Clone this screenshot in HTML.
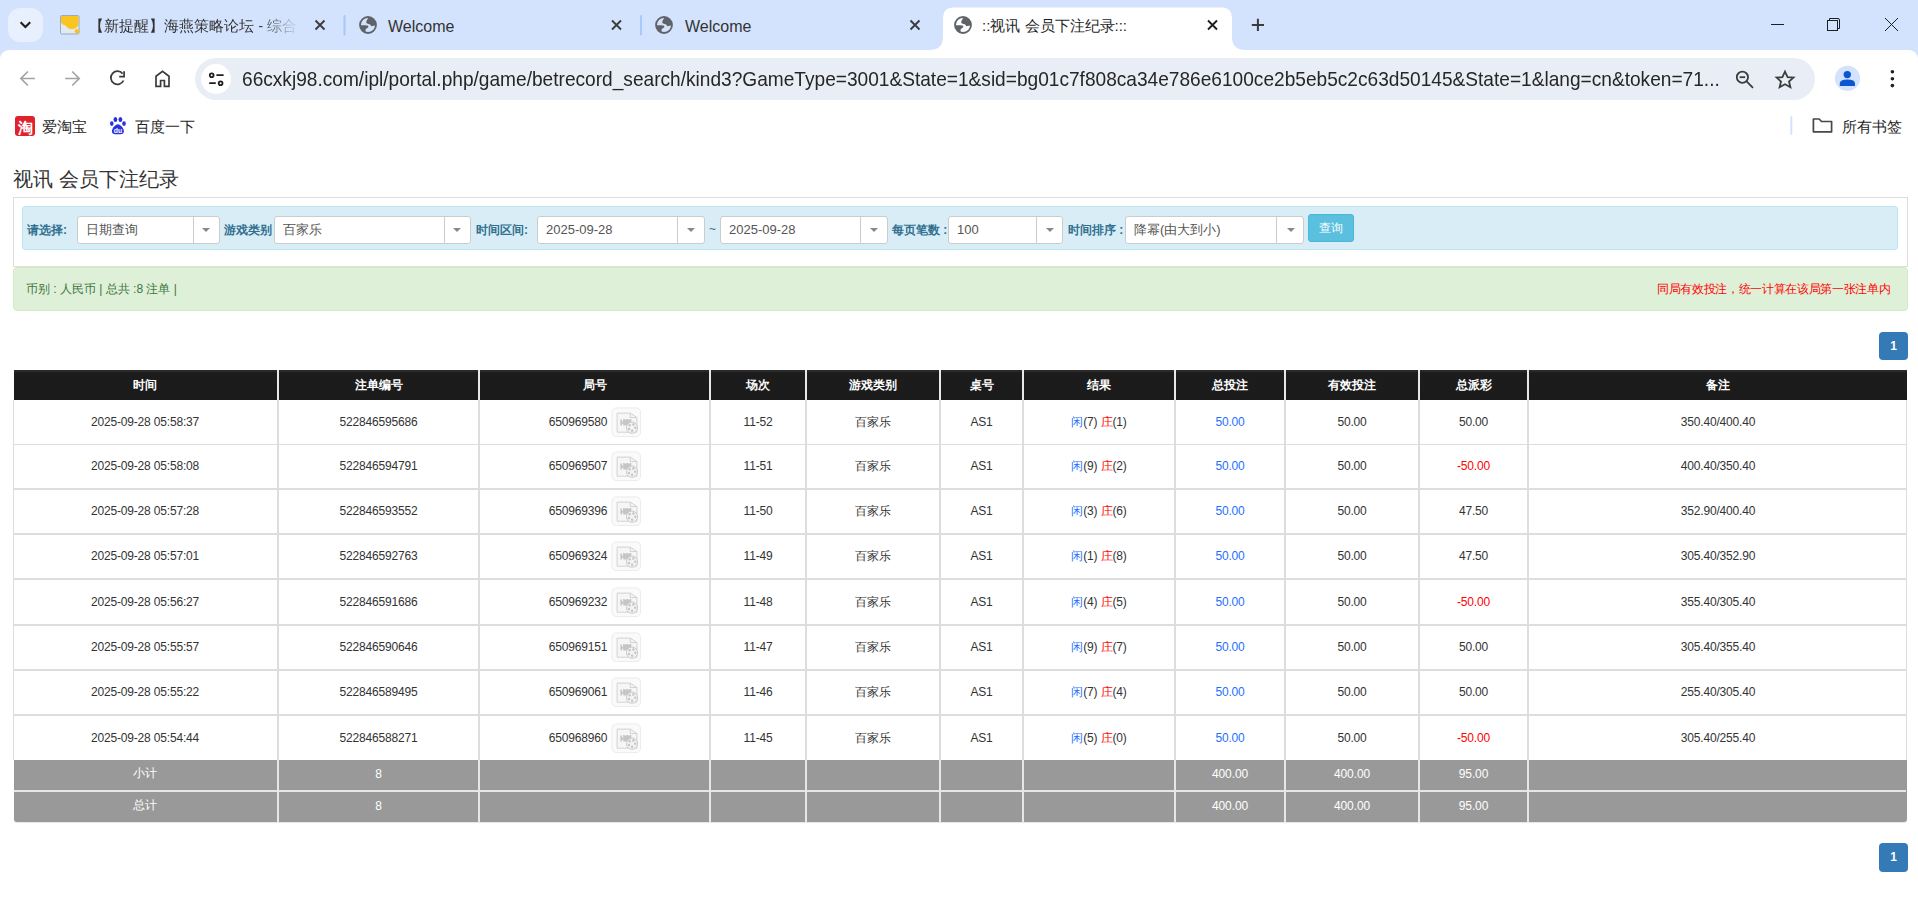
<!DOCTYPE html>
<html><head><meta charset="utf-8">
<style>
*{box-sizing:border-box;margin:0;padding:0}
html,body{width:1918px;height:914px;overflow:hidden;background:#fff;font-family:"Liberation Sans",sans-serif;position:relative}
.a{position:absolute}
#strip{left:0;top:0;width:1918px;height:62px;background:#d3e3fd}
#tool{left:0;top:50px;width:1918px;height:864px;background:#fff;border-radius:9px 9px 0 0}
.tabtxt{font-size:15px;color:#1f1f1f;white-space:nowrap;line-height:18px}
.sep{width:2px;height:20px;background:#a8c7fa;border-radius:1px;top:15px}
/* page */
.lbl{font-size:12px;font-weight:bold;color:#31708f;line-height:14px;white-space:nowrap}
.sel{top:216px;height:28px;background:#fff;border:1px solid #ccc;border-radius:3px}
.sel .v{position:absolute;left:8px;top:5px;font-size:13px;color:#555;line-height:15px;white-space:nowrap}
.sel .d{position:absolute;top:0;bottom:0;width:1px;background:#ccc}
.sel .ar{position:absolute;top:11px;width:0;height:0;border-left:4px solid transparent;border-right:4px solid transparent;border-top:4px solid #888}
.pg{width:29px;height:28px;background:#337ab7;border-radius:4px;color:#fff;font-size:12px;font-weight:bold;text-align:center;line-height:28px}
.th{top:370px;height:30px;display:flex;align-items:center;justify-content:center;color:#fff;font-size:12px;font-weight:bold}
.td{display:flex;align-items:center;justify-content:center;color:#333;font-size:12px;letter-spacing:-0.17px;white-space:nowrap}
.tf{height:30px;display:flex;align-items:center;justify-content:center;color:#fff;font-size:12px;letter-spacing:-0.1px;padding-bottom:3px}
.bl{color:#1f6fff}.rd{color:#f00}
.vi{margin-left:3px;display:inline-block;vertical-align:middle;position:relative;left:1px;top:0}
.in{display:inline-flex;align-items:center;white-space:pre}
</style></head><body>
<div id="strip" class="a"></div>
<div id="tool" class="a"></div>
<!-- tab strip -->
<div class="a" style="left:8px;top:8px;width:35px;height:34px;border-radius:12px;background:#e8effd"></div>
<svg class="a" style="left:0;top:0" width="1918" height="50" viewBox="0 0 1918 50">
  <!-- dropdown chevron -->
  <path d="M20.6 22.2L25.4 27L30.2 22.2" fill="none" stroke="#1f1f1f" stroke-width="2.1"/>
  <!-- favicon tab1 -->
  <rect x="60.5" y="15.5" width="18.5" height="18.5" rx="1.2" fill="#e2e9f3" stroke="#98aac4" stroke-width="1"/>
  <path d="M61 16H78.5V23C78.2 27 75.5 29.2 71.8 29.2C68.5 29.2 66.4 27.3 65.7 25.6C63.8 25.2 62 24 61 22.5Z" fill="#f9c520"/>
  <circle cx="77" cy="31.2" r="2.3" fill="#f9c01c"/>
  <!-- close X tabs -->
  <g stroke="#3c3c3c" stroke-width="1.9" stroke-linecap="butt">
    <path d="M315.5 20.5l9 9M324.5 20.5l-9 9"/>
    <path d="M612 20.5l9 9M621 20.5l-9 9"/>
    <path d="M910.5 20.5l9 9M919.5 20.5l-9 9"/>
  </g>
  <!-- separators -->
  <rect x="343.5" y="15" width="2" height="20.5" rx="1" fill="#a8c7fa"/>
  <rect x="640" y="15" width="2" height="20.5" rx="1" fill="#a8c7fa"/>
  <!-- active tab -->
  <path d="M929 50Q943 50 943 37V18Q943 7.5 953 7.5H1222Q1232 7.5 1232 18V37Q1232 50 1246 50Z" fill="#fff"/>
  <path d="M1208 20.5l9 9M1217 20.5l-9 9" stroke="#1f1f1f" stroke-width="1.9"/>
  <!-- plus -->
  <path d="M1251.8 25H1264M1257.9 18.8V31" stroke="#3c3c3c" stroke-width="2"/>
  <!-- window controls -->
  <path d="M1771 24.5H1784" stroke="#1f1f1f" stroke-width="1"/>
  <rect x="1827.5" y="20.5" width="10" height="10" fill="none" stroke="#1f1f1f" stroke-width="1"/>
  <path d="M1829.5 20V18.5H1838Q1839.5 18.5 1839.5 20V28.5H1838" fill="none" stroke="#1f1f1f" stroke-width="1"/>
  <path d="M1885 18L1898 31M1898 18L1885 31" stroke="#1f1f1f" stroke-width="1"/>
</svg>
<!-- globes -->
<svg class="a" style="left:359px;top:16px" width="18" height="18" viewBox="0 0 18 18"><g id="globe"><circle cx="9" cy="9" r="8" fill="none" stroke="#5f6368" stroke-width="1.8"/><path d="M10 1.2C8.5 3 7.3 4.5 7.2 6.3C7.3 7.6 8.7 8 10.5 8.2C11.5 8.5 11.8 9.3 12.2 10.2C14 10 15.6 9.6 16.8 9.5C17 5.5 14.5 2 10 1.2Z" fill="#5f6368"/><path d="M1.2 9.4C3.5 9.3 6.2 9.3 8.3 9.6C9.4 9.9 9.6 10.8 9 11.6C8 12.4 7 12.6 6.6 13.6C6.4 14.7 6.6 15.8 6.8 16.6C3.5 15.6 1.3 12.8 1.2 9.4Z" fill="#5f6368"/></g></svg>
<svg class="a" style="left:655px;top:16px" width="18" height="18" viewBox="0 0 18 18"><use href="#globe"/></svg>
<svg class="a" style="left:954px;top:16px" width="18" height="18" viewBox="0 0 18 18"><use href="#globe"/></svg>
<!-- tab titles -->
<div class="a tabtxt" style="left:89px;top:17px;width:210px;overflow:hidden;font-size:15px;color:#333;-webkit-mask-image:linear-gradient(90deg,#000 80%,transparent)">【新提醒】海燕策略论坛 - 综合社区</div>
<div class="a tabtxt" style="left:388px;top:18px;font-size:16px;color:#333">Welcome</div>
<div class="a tabtxt" style="left:685px;top:18px;font-size:16px;color:#333">Welcome</div>
<div class="a tabtxt" style="left:982px;top:17px;font-size:15px;color:#1f1f1f">::视讯 会员下注纪录:::</div>

<!-- toolbar -->
<svg class="a" style="left:0;top:50px" width="1918" height="100" viewBox="0 50 1918 100">
  <!-- back / forward -->
  <g fill="none" stroke="#a3a3a3" stroke-width="1.7">
    <path d="M34.9 78.5H21.5M27.9 71.5L20.9 78.5L27.9 85.5"/>
    <path d="M65.2 78.5H78.6M72.2 71.5L79.2 78.5L72.2 85.5"/>
  </g>
  <!-- reload -->
  <g fill="none" stroke="#3c3c3c" stroke-width="1.75">
    <path d="M123.5 80.5A6.6 6.6 0 1 1 122.6 73.6"/>
    <path d="M119.2 76.7H124.1V71.2"/>
  </g>
  <!-- home -->
  <path d="M156 86.4V76.2L162.5 71.3L169 76.2V86.4H164.4V80.5H160.6V86.4Z" fill="none" stroke="#3c3c3c" stroke-width="1.7" stroke-linejoin="miter"/>
  <!-- omnibox -->
  <rect x="195" y="58" width="1620" height="42" rx="21" fill="#e9eef6"/>
  <circle cx="216" cy="79" r="15" fill="#fff"/>
  <g fill="none" stroke="#1f1f1f" stroke-width="1.8">
    <circle cx="211.7" cy="75.3" r="1.9"/>
    <path d="M216.4 75.2H223.6M209.2 83.2H215.8"/>
    <circle cx="220.6" cy="83.3" r="1.9"/>
  </g>
  <!-- zoom -->
  <g fill="none" stroke="#3c3c3c" stroke-width="1.8">
    <circle cx="1742.4" cy="77.2" r="5.6"/>
    <path d="M1746.6 81.4L1753 87.8"/>
    <path d="M1739.6 77.2H1745.2"/>
  </g>
  <!-- star -->
  <path d="M1785 71.6L1787.6 77.2L1793.4 77.6L1789 81.5L1790.4 87.3L1785 84.2L1779.6 87.3L1781 81.5L1776.6 77.6L1782.4 77.2Z" fill="none" stroke="#3c3c3c" stroke-width="1.8" stroke-linejoin="miter"/>
  <!-- avatar -->
  <circle cx="1847.5" cy="78.4" r="12.6" fill="#d3e3fd"/>
  <circle cx="1847.3" cy="74.6" r="3.7" fill="#0b57d0"/>
  <path d="M1839.8 86V83.5Q1839.8 79.5 1847.4 79.5Q1855 79.5 1855 83.5V86Z" fill="#0b57d0"/>
  <!-- kebab -->
  <circle cx="1892.4" cy="71.8" r="1.8" fill="#1f1f1f"/>
  <circle cx="1892.4" cy="78.7" r="1.8" fill="#1f1f1f"/>
  <circle cx="1892.4" cy="85.6" r="1.8" fill="#1f1f1f"/>
  <!-- bookmarks: taobao -->
  <rect x="15" y="116" width="20" height="20" rx="3" fill="#e0222d"/>
  <text x="25" y="132.5" font-size="15" font-weight="bold" fill="#fff" text-anchor="middle">淘</text>
  <!-- baidu paw -->
  <g fill="#2932e1">
    <ellipse cx="111.8" cy="123.6" rx="1.8" ry="2.4"/>
    <ellipse cx="115.4" cy="119.5" rx="1.9" ry="2.5"/>
    <ellipse cx="120.4" cy="119.5" rx="1.9" ry="2.5"/>
    <ellipse cx="124" cy="123.6" rx="1.8" ry="2.4"/>
    <path d="M117.9 124.3C115.2 124.3 112.3 128.3 111.9 130.8C111.6 133.3 113.4 134.2 115.2 134.2H120.6C122.4 134.2 124.2 133.3 123.9 130.8C123.5 128.3 120.6 124.3 117.9 124.3Z"/>
  </g>
  <text x="117.9" y="132.6" font-size="6.8" font-weight="bold" fill="#fff" text-anchor="middle">du</text>
  <!-- bookmark separator + folder -->
  <rect x="1790.3" y="116" width="2" height="19" rx="1" fill="#d3e3fd"/>
  <path d="M1813.4 119V131.8H1831.6V121.5H1821.5L1819.2 119Z" fill="none" stroke="#474747" stroke-width="1.7" stroke-linejoin="round"/>
</svg>
<div class="a" style="left:242px;top:68px;font-size:19.8px;color:#262626;white-space:nowrap;line-height:22px;transform:scaleX(0.966);transform-origin:0 0">66cxkj98.com/ipl/portal.php/game/betrecord_search/kind3?GameType=3001&amp;State=1&amp;sid=bg01c7f808ca34e786e6100ce2b5eb5c2c63d50145&amp;State=1&amp;lang=cn&amp;token=71...</div>
<div class="a" style="left:42px;top:118px;font-size:15px;color:#1f1f1f;white-space:nowrap;line-height:18px">爱淘宝</div>
<div class="a" style="left:135px;top:118px;font-size:15px;color:#1f1f1f;white-space:nowrap;line-height:18px">百度一下</div>
<div class="a" style="left:1842px;top:118px;font-size:15px;color:#1f1f1f;white-space:nowrap;line-height:18px">所有书签</div>


<!-- PAGE -->
<div class="a" style="left:13px;top:167px;font-size:20px;color:#333;line-height:24px;white-space:nowrap">视讯 会员下注纪录</div>
<div class="a" style="left:13px;top:197px;width:1895px;height:70px;border:1px solid #ddd"></div>
<div class="a" style="left:22px;top:206px;width:1876px;height:44px;background:#d9edf7;border:1px solid #bce8f1;border-radius:3px"></div>

<div class="a lbl" style="left:27px;top:223px">请选择:</div>
<div class="a sel" style="left:77px;width:143px"><span class="v">日期查询</span><i class="d" style="left:115px"></i><i class="ar" style="left:124px"></i></div>
<div class="a lbl" style="left:224px;top:223px">游戏类别</div>
<div class="a sel" style="left:274px;width:197px"><span class="v">百家乐</span><i class="d" style="left:169px"></i><i class="ar" style="left:178px"></i></div>
<div class="a lbl" style="left:476px;top:223px">时间区间:</div>
<div class="a sel" style="left:537px;width:168px"><span class="v">2025-09-28</span><i class="d" style="left:139px"></i><i class="ar" style="left:149px"></i></div>
<div class="a" style="left:709px;top:222px;font-size:12px;color:#31708f">~</div>
<div class="a sel" style="left:720px;width:168px"><span class="v">2025-09-28</span><i class="d" style="left:139px"></i><i class="ar" style="left:149px"></i></div>
<div class="a lbl" style="left:892px;top:223px">每页笔数 :</div>
<div class="a sel" style="left:948px;width:115px"><span class="v">100</span><i class="d" style="left:87px"></i><i class="ar" style="left:97px"></i></div>
<div class="a lbl" style="left:1068px;top:223px">时间排序 :</div>
<div class="a sel" style="left:1125px;width:179px"><span class="v">降幂(由大到小)</span><i class="d" style="left:150px"></i><i class="ar" style="left:161px"></i></div>
<div class="a" style="left:1308px;top:214px;width:46px;height:28px;background:#5bc0de;border:1px solid #46b8da;border-radius:3px;color:#fff;font-size:12px;text-align:center;line-height:26px">查询</div>

<div class="a" style="left:13px;top:267px;width:1895px;height:44px;background:#dff0d8;border:1px solid #d6e9c6;border-radius:4px"></div>
<div class="a" style="left:26px;top:282px;font-size:12px;color:#3c763d;line-height:14px;white-space:nowrap">币别 : 人民币 | 总共 :8 注单 |</div>
<div class="a" style="left:1657px;top:282px;font-size:12px;letter-spacing:-0.33px;color:#f00;line-height:14px;white-space:nowrap">同局有效投注，统一计算在该局第一张注单内</div>

<div class="a pg" style="left:1879px;top:332px">1</div>
<div class="a" style="left:14px;top:370px;width:1893px;height:30px;background:linear-gradient(#303030,#1c1c1c 3px,#1b1b1b)"></div>
<div class="a th" style="left:13px;width:264px">时间</div>
<div class="a th" style="left:279px;width:199px">注单编号</div>
<div class="a th" style="left:480px;width:229px">局号</div>
<div class="a th" style="left:711px;width:94px">场次</div>
<div class="a th" style="left:807px;width:132px">游戏类别</div>
<div class="a th" style="left:941px;width:81px">桌号</div>
<div class="a th" style="left:1024px;width:150px">结果</div>
<div class="a th" style="left:1176px;width:108px">总投注</div>
<div class="a th" style="left:1286px;width:132px">有效投注</div>
<div class="a th" style="left:1420px;width:107px">总派彩</div>
<div class="a th" style="left:1529px;width:378px">备注</div>
<div class="a" style="left:277px;top:370px;width:2px;height:30px;background:#e8e8e8"></div>
<div class="a" style="left:478px;top:370px;width:2px;height:30px;background:#e8e8e8"></div>
<div class="a" style="left:709px;top:370px;width:2px;height:30px;background:#e8e8e8"></div>
<div class="a" style="left:805px;top:370px;width:2px;height:30px;background:#e8e8e8"></div>
<div class="a" style="left:939px;top:370px;width:2px;height:30px;background:#e8e8e8"></div>
<div class="a" style="left:1022px;top:370px;width:2px;height:30px;background:#e8e8e8"></div>
<div class="a" style="left:1174px;top:370px;width:2px;height:30px;background:#e8e8e8"></div>
<div class="a" style="left:1284px;top:370px;width:2px;height:30px;background:#e8e8e8"></div>
<div class="a" style="left:1418px;top:370px;width:2px;height:30px;background:#e8e8e8"></div>
<div class="a" style="left:1527px;top:370px;width:2px;height:30px;background:#e8e8e8"></div>
<div class="a" style="left:13px;top:400px;width:1894px;height:360px;background:#fff;border-left:1px solid #ddd;border-right:1px solid #ddd"></div>
<div class="a" style="left:14px;top:444px;width:1892px;height:1px;background:#ddd"></div>
<div class="a td" style="left:13px;top:400px;width:264px;height:44px"><span class="in">2025-09-28 05:58:37</span></div>
<div class="a td" style="left:279px;top:400px;width:199px;height:44px"><span class="in">522846595686</span></div>
<div class="a td" style="left:480px;top:400px;width:229px;height:44px"><span class="in">650969580<svg class="vi" width="30" height="30" viewBox="0 0 30 30"><rect x="0.9" y="0.9" width="28.7" height="28.7" rx="4.5" fill="#fafafa" stroke="#ebebeb"/><path d="M6.1 6.1H19.3L25.9 10.5V25.2H6.1Z" fill="#f6f6f6" stroke="#d2d2d2" stroke-width="1"/><path d="M19.3 6.1V10.5H25.9" fill="none" stroke="#d2d2d2"/><path d="M9.3 12.4h1.6v1.6l1.2 0.9v-2.8h1.5l0.9 0.9l0.9-0.9h1.6l0.9 0.9l0.9-0.9h1.5v6.5h-8.1v-2.3l-1.2 0.9v1.4h-1.6z" fill="#c6c6c6"/><circle cx="21" cy="20.7" r="5.6" fill="#f3f3f3" stroke="#cbcbcb" stroke-width="1"/><circle cx="18.7" cy="18.2" r="1.25" fill="#c6c6c6"/><circle cx="22.4" cy="17.6" r="1.25" fill="#c6c6c6"/><circle cx="24.3" cy="20.8" r="1.25" fill="#c6c6c6"/><circle cx="21.1" cy="23.7" r="1.25" fill="#c6c6c6"/><circle cx="18" cy="21.9" r="1.25" fill="#c6c6c6"/></svg></span></div>
<div class="a td" style="left:711px;top:400px;width:94px;height:44px"><span class="in">11-52</span></div>
<div class="a td" style="left:807px;top:400px;width:132px;height:44px"><span class="in">百家乐</span></div>
<div class="a td" style="left:941px;top:400px;width:81px;height:44px"><span class="in">AS1</span></div>
<div class="a td" style="left:1024px;top:400px;width:150px;height:44px"><span class="in"><span class="bl">闲</span>(7) <span class="rd">庄</span>(1)</span></div>
<div class="a td" style="left:1176px;top:400px;width:108px;height:44px"><span class="in"><span class="bl">50.00</span></span></div>
<div class="a td" style="left:1286px;top:400px;width:132px;height:44px"><span class="in">50.00</span></div>
<div class="a td" style="left:1420px;top:400px;width:107px;height:44px"><span class="in">50.00</span></div>
<div class="a td" style="left:1529px;top:400px;width:378px;height:44px"><span class="in">350.40/400.40</span></div>
<div class="a" style="left:14px;top:488px;width:1892px;height:2px;background:#ddd"></div>
<div class="a td" style="left:13px;top:445px;width:264px;height:43px;padding-bottom:1px"><span class="in">2025-09-28 05:58:08</span></div>
<div class="a td" style="left:279px;top:445px;width:199px;height:43px;padding-bottom:1px"><span class="in">522846594791</span></div>
<div class="a td" style="left:480px;top:445px;width:229px;height:43px;padding-bottom:1px"><span class="in">650969507<svg class="vi" width="30" height="30" viewBox="0 0 30 30"><rect x="0.9" y="0.9" width="28.7" height="28.7" rx="4.5" fill="#fafafa" stroke="#ebebeb"/><path d="M6.1 6.1H19.3L25.9 10.5V25.2H6.1Z" fill="#f6f6f6" stroke="#d2d2d2" stroke-width="1"/><path d="M19.3 6.1V10.5H25.9" fill="none" stroke="#d2d2d2"/><path d="M9.3 12.4h1.6v1.6l1.2 0.9v-2.8h1.5l0.9 0.9l0.9-0.9h1.6l0.9 0.9l0.9-0.9h1.5v6.5h-8.1v-2.3l-1.2 0.9v1.4h-1.6z" fill="#c6c6c6"/><circle cx="21" cy="20.7" r="5.6" fill="#f3f3f3" stroke="#cbcbcb" stroke-width="1"/><circle cx="18.7" cy="18.2" r="1.25" fill="#c6c6c6"/><circle cx="22.4" cy="17.6" r="1.25" fill="#c6c6c6"/><circle cx="24.3" cy="20.8" r="1.25" fill="#c6c6c6"/><circle cx="21.1" cy="23.7" r="1.25" fill="#c6c6c6"/><circle cx="18" cy="21.9" r="1.25" fill="#c6c6c6"/></svg></span></div>
<div class="a td" style="left:711px;top:445px;width:94px;height:43px;padding-bottom:1px"><span class="in">11-51</span></div>
<div class="a td" style="left:807px;top:445px;width:132px;height:43px;padding-bottom:1px"><span class="in">百家乐</span></div>
<div class="a td" style="left:941px;top:445px;width:81px;height:43px;padding-bottom:1px"><span class="in">AS1</span></div>
<div class="a td" style="left:1024px;top:445px;width:150px;height:43px;padding-bottom:1px"><span class="in"><span class="bl">闲</span>(9) <span class="rd">庄</span>(2)</span></div>
<div class="a td" style="left:1176px;top:445px;width:108px;height:43px;padding-bottom:1px"><span class="in"><span class="bl">50.00</span></span></div>
<div class="a td" style="left:1286px;top:445px;width:132px;height:43px;padding-bottom:1px"><span class="in">50.00</span></div>
<div class="a td" style="left:1420px;top:445px;width:107px;height:43px;padding-bottom:1px"><span class="in"><span class="rd">-50.00</span></span></div>
<div class="a td" style="left:1529px;top:445px;width:378px;height:43px;padding-bottom:1px"><span class="in">400.40/350.40</span></div>
<div class="a" style="left:14px;top:533px;width:1892px;height:2px;background:#ddd"></div>
<div class="a td" style="left:13px;top:490px;width:264px;height:43px;padding-bottom:1px"><span class="in">2025-09-28 05:57:28</span></div>
<div class="a td" style="left:279px;top:490px;width:199px;height:43px;padding-bottom:1px"><span class="in">522846593552</span></div>
<div class="a td" style="left:480px;top:490px;width:229px;height:43px;padding-bottom:1px"><span class="in">650969396<svg class="vi" width="30" height="30" viewBox="0 0 30 30"><rect x="0.9" y="0.9" width="28.7" height="28.7" rx="4.5" fill="#fafafa" stroke="#ebebeb"/><path d="M6.1 6.1H19.3L25.9 10.5V25.2H6.1Z" fill="#f6f6f6" stroke="#d2d2d2" stroke-width="1"/><path d="M19.3 6.1V10.5H25.9" fill="none" stroke="#d2d2d2"/><path d="M9.3 12.4h1.6v1.6l1.2 0.9v-2.8h1.5l0.9 0.9l0.9-0.9h1.6l0.9 0.9l0.9-0.9h1.5v6.5h-8.1v-2.3l-1.2 0.9v1.4h-1.6z" fill="#c6c6c6"/><circle cx="21" cy="20.7" r="5.6" fill="#f3f3f3" stroke="#cbcbcb" stroke-width="1"/><circle cx="18.7" cy="18.2" r="1.25" fill="#c6c6c6"/><circle cx="22.4" cy="17.6" r="1.25" fill="#c6c6c6"/><circle cx="24.3" cy="20.8" r="1.25" fill="#c6c6c6"/><circle cx="21.1" cy="23.7" r="1.25" fill="#c6c6c6"/><circle cx="18" cy="21.9" r="1.25" fill="#c6c6c6"/></svg></span></div>
<div class="a td" style="left:711px;top:490px;width:94px;height:43px;padding-bottom:1px"><span class="in">11-50</span></div>
<div class="a td" style="left:807px;top:490px;width:132px;height:43px;padding-bottom:1px"><span class="in">百家乐</span></div>
<div class="a td" style="left:941px;top:490px;width:81px;height:43px;padding-bottom:1px"><span class="in">AS1</span></div>
<div class="a td" style="left:1024px;top:490px;width:150px;height:43px;padding-bottom:1px"><span class="in"><span class="bl">闲</span>(3) <span class="rd">庄</span>(6)</span></div>
<div class="a td" style="left:1176px;top:490px;width:108px;height:43px;padding-bottom:1px"><span class="in"><span class="bl">50.00</span></span></div>
<div class="a td" style="left:1286px;top:490px;width:132px;height:43px;padding-bottom:1px"><span class="in">50.00</span></div>
<div class="a td" style="left:1420px;top:490px;width:107px;height:43px;padding-bottom:1px"><span class="in">47.50</span></div>
<div class="a td" style="left:1529px;top:490px;width:378px;height:43px;padding-bottom:1px"><span class="in">352.90/400.40</span></div>
<div class="a" style="left:14px;top:578px;width:1892px;height:2px;background:#ddd"></div>
<div class="a td" style="left:13px;top:535px;width:264px;height:43px;padding-bottom:1px"><span class="in">2025-09-28 05:57:01</span></div>
<div class="a td" style="left:279px;top:535px;width:199px;height:43px;padding-bottom:1px"><span class="in">522846592763</span></div>
<div class="a td" style="left:480px;top:535px;width:229px;height:43px;padding-bottom:1px"><span class="in">650969324<svg class="vi" width="30" height="30" viewBox="0 0 30 30"><rect x="0.9" y="0.9" width="28.7" height="28.7" rx="4.5" fill="#fafafa" stroke="#ebebeb"/><path d="M6.1 6.1H19.3L25.9 10.5V25.2H6.1Z" fill="#f6f6f6" stroke="#d2d2d2" stroke-width="1"/><path d="M19.3 6.1V10.5H25.9" fill="none" stroke="#d2d2d2"/><path d="M9.3 12.4h1.6v1.6l1.2 0.9v-2.8h1.5l0.9 0.9l0.9-0.9h1.6l0.9 0.9l0.9-0.9h1.5v6.5h-8.1v-2.3l-1.2 0.9v1.4h-1.6z" fill="#c6c6c6"/><circle cx="21" cy="20.7" r="5.6" fill="#f3f3f3" stroke="#cbcbcb" stroke-width="1"/><circle cx="18.7" cy="18.2" r="1.25" fill="#c6c6c6"/><circle cx="22.4" cy="17.6" r="1.25" fill="#c6c6c6"/><circle cx="24.3" cy="20.8" r="1.25" fill="#c6c6c6"/><circle cx="21.1" cy="23.7" r="1.25" fill="#c6c6c6"/><circle cx="18" cy="21.9" r="1.25" fill="#c6c6c6"/></svg></span></div>
<div class="a td" style="left:711px;top:535px;width:94px;height:43px;padding-bottom:1px"><span class="in">11-49</span></div>
<div class="a td" style="left:807px;top:535px;width:132px;height:43px;padding-bottom:1px"><span class="in">百家乐</span></div>
<div class="a td" style="left:941px;top:535px;width:81px;height:43px;padding-bottom:1px"><span class="in">AS1</span></div>
<div class="a td" style="left:1024px;top:535px;width:150px;height:43px;padding-bottom:1px"><span class="in"><span class="bl">闲</span>(1) <span class="rd">庄</span>(8)</span></div>
<div class="a td" style="left:1176px;top:535px;width:108px;height:43px;padding-bottom:1px"><span class="in"><span class="bl">50.00</span></span></div>
<div class="a td" style="left:1286px;top:535px;width:132px;height:43px;padding-bottom:1px"><span class="in">50.00</span></div>
<div class="a td" style="left:1420px;top:535px;width:107px;height:43px;padding-bottom:1px"><span class="in">47.50</span></div>
<div class="a td" style="left:1529px;top:535px;width:378px;height:43px;padding-bottom:1px"><span class="in">305.40/352.90</span></div>
<div class="a" style="left:14px;top:624px;width:1892px;height:2px;background:#ddd"></div>
<div class="a td" style="left:13px;top:580px;width:264px;height:44px"><span class="in">2025-09-28 05:56:27</span></div>
<div class="a td" style="left:279px;top:580px;width:199px;height:44px"><span class="in">522846591686</span></div>
<div class="a td" style="left:480px;top:580px;width:229px;height:44px"><span class="in">650969232<svg class="vi" width="30" height="30" viewBox="0 0 30 30"><rect x="0.9" y="0.9" width="28.7" height="28.7" rx="4.5" fill="#fafafa" stroke="#ebebeb"/><path d="M6.1 6.1H19.3L25.9 10.5V25.2H6.1Z" fill="#f6f6f6" stroke="#d2d2d2" stroke-width="1"/><path d="M19.3 6.1V10.5H25.9" fill="none" stroke="#d2d2d2"/><path d="M9.3 12.4h1.6v1.6l1.2 0.9v-2.8h1.5l0.9 0.9l0.9-0.9h1.6l0.9 0.9l0.9-0.9h1.5v6.5h-8.1v-2.3l-1.2 0.9v1.4h-1.6z" fill="#c6c6c6"/><circle cx="21" cy="20.7" r="5.6" fill="#f3f3f3" stroke="#cbcbcb" stroke-width="1"/><circle cx="18.7" cy="18.2" r="1.25" fill="#c6c6c6"/><circle cx="22.4" cy="17.6" r="1.25" fill="#c6c6c6"/><circle cx="24.3" cy="20.8" r="1.25" fill="#c6c6c6"/><circle cx="21.1" cy="23.7" r="1.25" fill="#c6c6c6"/><circle cx="18" cy="21.9" r="1.25" fill="#c6c6c6"/></svg></span></div>
<div class="a td" style="left:711px;top:580px;width:94px;height:44px"><span class="in">11-48</span></div>
<div class="a td" style="left:807px;top:580px;width:132px;height:44px"><span class="in">百家乐</span></div>
<div class="a td" style="left:941px;top:580px;width:81px;height:44px"><span class="in">AS1</span></div>
<div class="a td" style="left:1024px;top:580px;width:150px;height:44px"><span class="in"><span class="bl">闲</span>(4) <span class="rd">庄</span>(5)</span></div>
<div class="a td" style="left:1176px;top:580px;width:108px;height:44px"><span class="in"><span class="bl">50.00</span></span></div>
<div class="a td" style="left:1286px;top:580px;width:132px;height:44px"><span class="in">50.00</span></div>
<div class="a td" style="left:1420px;top:580px;width:107px;height:44px"><span class="in"><span class="rd">-50.00</span></span></div>
<div class="a td" style="left:1529px;top:580px;width:378px;height:44px"><span class="in">355.40/305.40</span></div>
<div class="a" style="left:14px;top:669px;width:1892px;height:2px;background:#ddd"></div>
<div class="a td" style="left:13px;top:626px;width:264px;height:43px;padding-bottom:1px"><span class="in">2025-09-28 05:55:57</span></div>
<div class="a td" style="left:279px;top:626px;width:199px;height:43px;padding-bottom:1px"><span class="in">522846590646</span></div>
<div class="a td" style="left:480px;top:626px;width:229px;height:43px;padding-bottom:1px"><span class="in">650969151<svg class="vi" width="30" height="30" viewBox="0 0 30 30"><rect x="0.9" y="0.9" width="28.7" height="28.7" rx="4.5" fill="#fafafa" stroke="#ebebeb"/><path d="M6.1 6.1H19.3L25.9 10.5V25.2H6.1Z" fill="#f6f6f6" stroke="#d2d2d2" stroke-width="1"/><path d="M19.3 6.1V10.5H25.9" fill="none" stroke="#d2d2d2"/><path d="M9.3 12.4h1.6v1.6l1.2 0.9v-2.8h1.5l0.9 0.9l0.9-0.9h1.6l0.9 0.9l0.9-0.9h1.5v6.5h-8.1v-2.3l-1.2 0.9v1.4h-1.6z" fill="#c6c6c6"/><circle cx="21" cy="20.7" r="5.6" fill="#f3f3f3" stroke="#cbcbcb" stroke-width="1"/><circle cx="18.7" cy="18.2" r="1.25" fill="#c6c6c6"/><circle cx="22.4" cy="17.6" r="1.25" fill="#c6c6c6"/><circle cx="24.3" cy="20.8" r="1.25" fill="#c6c6c6"/><circle cx="21.1" cy="23.7" r="1.25" fill="#c6c6c6"/><circle cx="18" cy="21.9" r="1.25" fill="#c6c6c6"/></svg></span></div>
<div class="a td" style="left:711px;top:626px;width:94px;height:43px;padding-bottom:1px"><span class="in">11-47</span></div>
<div class="a td" style="left:807px;top:626px;width:132px;height:43px;padding-bottom:1px"><span class="in">百家乐</span></div>
<div class="a td" style="left:941px;top:626px;width:81px;height:43px;padding-bottom:1px"><span class="in">AS1</span></div>
<div class="a td" style="left:1024px;top:626px;width:150px;height:43px;padding-bottom:1px"><span class="in"><span class="bl">闲</span>(9) <span class="rd">庄</span>(7)</span></div>
<div class="a td" style="left:1176px;top:626px;width:108px;height:43px;padding-bottom:1px"><span class="in"><span class="bl">50.00</span></span></div>
<div class="a td" style="left:1286px;top:626px;width:132px;height:43px;padding-bottom:1px"><span class="in">50.00</span></div>
<div class="a td" style="left:1420px;top:626px;width:107px;height:43px;padding-bottom:1px"><span class="in">50.00</span></div>
<div class="a td" style="left:1529px;top:626px;width:378px;height:43px;padding-bottom:1px"><span class="in">305.40/355.40</span></div>
<div class="a" style="left:14px;top:714px;width:1892px;height:2px;background:#ddd"></div>
<div class="a td" style="left:13px;top:671px;width:264px;height:43px;padding-bottom:1px"><span class="in">2025-09-28 05:55:22</span></div>
<div class="a td" style="left:279px;top:671px;width:199px;height:43px;padding-bottom:1px"><span class="in">522846589495</span></div>
<div class="a td" style="left:480px;top:671px;width:229px;height:43px;padding-bottom:1px"><span class="in">650969061<svg class="vi" width="30" height="30" viewBox="0 0 30 30"><rect x="0.9" y="0.9" width="28.7" height="28.7" rx="4.5" fill="#fafafa" stroke="#ebebeb"/><path d="M6.1 6.1H19.3L25.9 10.5V25.2H6.1Z" fill="#f6f6f6" stroke="#d2d2d2" stroke-width="1"/><path d="M19.3 6.1V10.5H25.9" fill="none" stroke="#d2d2d2"/><path d="M9.3 12.4h1.6v1.6l1.2 0.9v-2.8h1.5l0.9 0.9l0.9-0.9h1.6l0.9 0.9l0.9-0.9h1.5v6.5h-8.1v-2.3l-1.2 0.9v1.4h-1.6z" fill="#c6c6c6"/><circle cx="21" cy="20.7" r="5.6" fill="#f3f3f3" stroke="#cbcbcb" stroke-width="1"/><circle cx="18.7" cy="18.2" r="1.25" fill="#c6c6c6"/><circle cx="22.4" cy="17.6" r="1.25" fill="#c6c6c6"/><circle cx="24.3" cy="20.8" r="1.25" fill="#c6c6c6"/><circle cx="21.1" cy="23.7" r="1.25" fill="#c6c6c6"/><circle cx="18" cy="21.9" r="1.25" fill="#c6c6c6"/></svg></span></div>
<div class="a td" style="left:711px;top:671px;width:94px;height:43px;padding-bottom:1px"><span class="in">11-46</span></div>
<div class="a td" style="left:807px;top:671px;width:132px;height:43px;padding-bottom:1px"><span class="in">百家乐</span></div>
<div class="a td" style="left:941px;top:671px;width:81px;height:43px;padding-bottom:1px"><span class="in">AS1</span></div>
<div class="a td" style="left:1024px;top:671px;width:150px;height:43px;padding-bottom:1px"><span class="in"><span class="bl">闲</span>(7) <span class="rd">庄</span>(4)</span></div>
<div class="a td" style="left:1176px;top:671px;width:108px;height:43px;padding-bottom:1px"><span class="in"><span class="bl">50.00</span></span></div>
<div class="a td" style="left:1286px;top:671px;width:132px;height:43px;padding-bottom:1px"><span class="in">50.00</span></div>
<div class="a td" style="left:1420px;top:671px;width:107px;height:43px;padding-bottom:1px"><span class="in">50.00</span></div>
<div class="a td" style="left:1529px;top:671px;width:378px;height:43px;padding-bottom:1px"><span class="in">255.40/305.40</span></div>
<div class="a td" style="left:13px;top:716px;width:264px;height:44px"><span class="in">2025-09-28 05:54:44</span></div>
<div class="a td" style="left:279px;top:716px;width:199px;height:44px"><span class="in">522846588271</span></div>
<div class="a td" style="left:480px;top:716px;width:229px;height:44px"><span class="in">650968960<svg class="vi" width="30" height="30" viewBox="0 0 30 30"><rect x="0.9" y="0.9" width="28.7" height="28.7" rx="4.5" fill="#fafafa" stroke="#ebebeb"/><path d="M6.1 6.1H19.3L25.9 10.5V25.2H6.1Z" fill="#f6f6f6" stroke="#d2d2d2" stroke-width="1"/><path d="M19.3 6.1V10.5H25.9" fill="none" stroke="#d2d2d2"/><path d="M9.3 12.4h1.6v1.6l1.2 0.9v-2.8h1.5l0.9 0.9l0.9-0.9h1.6l0.9 0.9l0.9-0.9h1.5v6.5h-8.1v-2.3l-1.2 0.9v1.4h-1.6z" fill="#c6c6c6"/><circle cx="21" cy="20.7" r="5.6" fill="#f3f3f3" stroke="#cbcbcb" stroke-width="1"/><circle cx="18.7" cy="18.2" r="1.25" fill="#c6c6c6"/><circle cx="22.4" cy="17.6" r="1.25" fill="#c6c6c6"/><circle cx="24.3" cy="20.8" r="1.25" fill="#c6c6c6"/><circle cx="21.1" cy="23.7" r="1.25" fill="#c6c6c6"/><circle cx="18" cy="21.9" r="1.25" fill="#c6c6c6"/></svg></span></div>
<div class="a td" style="left:711px;top:716px;width:94px;height:44px"><span class="in">11-45</span></div>
<div class="a td" style="left:807px;top:716px;width:132px;height:44px"><span class="in">百家乐</span></div>
<div class="a td" style="left:941px;top:716px;width:81px;height:44px"><span class="in">AS1</span></div>
<div class="a td" style="left:1024px;top:716px;width:150px;height:44px"><span class="in"><span class="bl">闲</span>(5) <span class="rd">庄</span>(0)</span></div>
<div class="a td" style="left:1176px;top:716px;width:108px;height:44px"><span class="in"><span class="bl">50.00</span></span></div>
<div class="a td" style="left:1286px;top:716px;width:132px;height:44px"><span class="in">50.00</span></div>
<div class="a td" style="left:1420px;top:716px;width:107px;height:44px"><span class="in"><span class="rd">-50.00</span></span></div>
<div class="a td" style="left:1529px;top:716px;width:378px;height:44px"><span class="in">305.40/255.40</span></div>
<div class="a" style="left:277px;top:400px;width:2px;height:360px;background:#ddd"></div>
<div class="a" style="left:478px;top:400px;width:2px;height:360px;background:#ddd"></div>
<div class="a" style="left:709px;top:400px;width:2px;height:360px;background:#ddd"></div>
<div class="a" style="left:805px;top:400px;width:2px;height:360px;background:#ddd"></div>
<div class="a" style="left:939px;top:400px;width:2px;height:360px;background:#ddd"></div>
<div class="a" style="left:1022px;top:400px;width:2px;height:360px;background:#ddd"></div>
<div class="a" style="left:1174px;top:400px;width:2px;height:360px;background:#ddd"></div>
<div class="a" style="left:1284px;top:400px;width:2px;height:360px;background:#ddd"></div>
<div class="a" style="left:1418px;top:400px;width:2px;height:360px;background:#ddd"></div>
<div class="a" style="left:1527px;top:400px;width:2px;height:360px;background:#ddd"></div>
<div class="a" style="left:14px;top:760px;width:1893px;height:62px;background:#999;border-radius:0 0 3px 3px;box-shadow:0 1px 1px rgba(0,0,0,.1)"></div>
<div class="a" style="left:14px;top:790px;width:1892px;height:2px;background:#e6e6e6"></div>
<div class="a" style="left:277px;top:760px;width:2px;height:62px;background:#e6e6e6"></div>
<div class="a" style="left:478px;top:760px;width:2px;height:62px;background:#e6e6e6"></div>
<div class="a" style="left:709px;top:760px;width:2px;height:62px;background:#e6e6e6"></div>
<div class="a" style="left:805px;top:760px;width:2px;height:62px;background:#e6e6e6"></div>
<div class="a" style="left:939px;top:760px;width:2px;height:62px;background:#e6e6e6"></div>
<div class="a" style="left:1022px;top:760px;width:2px;height:62px;background:#e6e6e6"></div>
<div class="a" style="left:1174px;top:760px;width:2px;height:62px;background:#e6e6e6"></div>
<div class="a" style="left:1284px;top:760px;width:2px;height:62px;background:#e6e6e6"></div>
<div class="a" style="left:1418px;top:760px;width:2px;height:62px;background:#e6e6e6"></div>
<div class="a" style="left:1527px;top:760px;width:2px;height:62px;background:#e6e6e6"></div>
<div class="a tf" style="left:13px;top:760px;width:264px">小计</div>
<div class="a tf" style="left:279px;top:760px;width:199px">8</div>
<div class="a tf" style="left:1176px;top:760px;width:108px">400.00</div>
<div class="a tf" style="left:1286px;top:760px;width:132px">400.00</div>
<div class="a tf" style="left:1420px;top:760px;width:107px">95.00</div>
<div class="a tf" style="left:13px;top:792px;width:264px">总计</div>
<div class="a tf" style="left:279px;top:792px;width:199px">8</div>
<div class="a tf" style="left:1176px;top:792px;width:108px">400.00</div>
<div class="a tf" style="left:1286px;top:792px;width:132px">400.00</div>
<div class="a tf" style="left:1420px;top:792px;width:107px">95.00</div>
<div class="a pg" style="left:1879px;top:843px;height:29px;line-height:29px">1</div>

</body></html>
